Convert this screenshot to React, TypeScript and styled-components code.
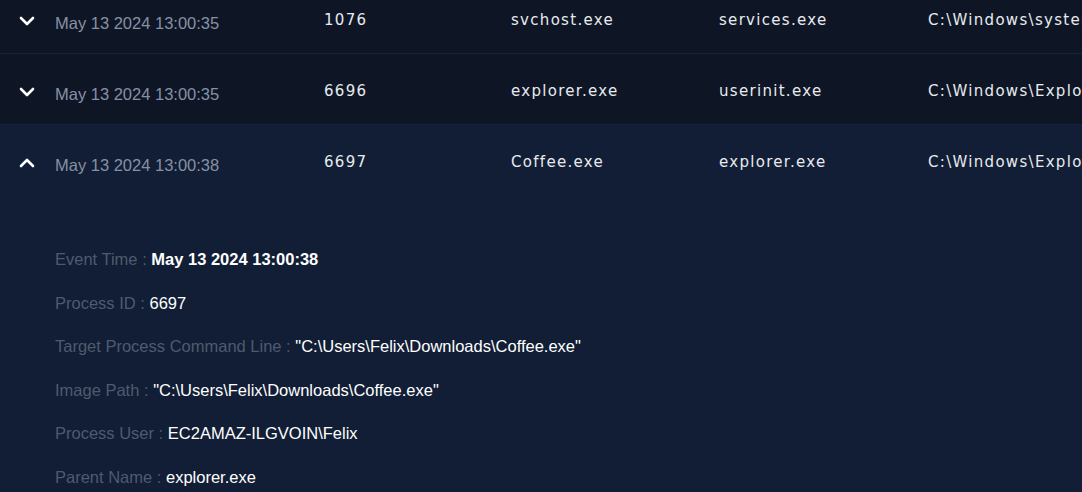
import styled, { createGlobalStyle } from "styled-components";

const GlobalStyle = createGlobalStyle`
  html, body {
    margin: 0;
    padding: 0;
    background-color: #0e1626;
    overflow: hidden;
  }
`;

const Table = styled.div`
  width: 1082px;
  height: 492px;
  overflow: hidden;
  background-color: #0e1626;
`;

const Scroller = styled.div`
  margin-top: -17px;
`;

const Row = styled.div<{ $open?: boolean }>`
  display: grid;
  grid-template-columns: 55px 269px 187px 208px 209px 1fr;
  align-items: center;
  height: 71px;
  background-color: ${(p) => (p.$open ? "#111e35" : "#0e1626")};
  border-bottom: 1px solid ${(p) => (p.$open ? "#111e35" : "#18223a")};
  box-sizing: border-box;
  white-space: nowrap;
  overflow: hidden;
`;

const Toggle = styled.div`
  display: flex;
  align-items: center;
  padding-left: 19px;
  padding-top: 6px;
`;

const DateCell = styled.div`
  font-family: "Liberation Sans", Arial, sans-serif;
  font-size: 16.5px;
  color: #8790a4;
  padding-top: 10px;
`;

const Cell = styled.div`
  font-family: "DejaVu Sans", "Open Sans", sans-serif;
  font-size: 15px;
  letter-spacing: 1.3px;
  color: #e8eaee;
  padding-top: 4px;
  overflow: hidden;
`;

const Details = styled.div`
  background-color: #111e35;
  padding: 54px 0 0 55px;
  height: 400px;
`;

const Line = styled.div`
  height: 43.6px;
  font-family: "Liberation Sans", Arial, sans-serif;
  font-size: 16.5px;
  white-space: nowrap;
`;

const Label = styled.span`
  color: #4f5a6f;
`;

const Value = styled.span<{ $bold?: boolean }>`
  color: #ffffff;
  font-weight: ${(p) => (p.$bold ? 700 : 400)};
`;

const Chevron = ({ up }: { up?: boolean }) => (
  <svg width="16" height="10" viewBox="0 0 16 10">
    <polyline
      points={up ? "2,8 8,2 14,8" : "2,2 8,8 14,2"}
      fill="none"
      stroke="#ffffff"
      strokeWidth="2.6"
      strokeLinecap="round"
      strokeLinejoin="round"
    />
  </svg>
);

const events = [
  { time: "May 13 2024 13:00:35", pid: "1076", name: "svchost.exe", parent: "services.exe", path: "C:\\Windows\\system32\\svchost.exe" },
  { time: "May 13 2024 13:00:35", pid: "6696", name: "explorer.exe", parent: "userinit.exe", path: "C:\\Windows\\Explorer.EXE" },
  { time: "May 13 2024 13:00:38", pid: "6697", name: "Coffee.exe", parent: "explorer.exe", path: "C:\\Windows\\Explorer.EXE", open: true },
];

const details = [
  { label: "Event Time", value: "May 13 2024 13:00:38", bold: true },
  { label: "Process ID", value: "6697" },
  { label: "Target Process Command Line", value: '"C:\\Users\\Felix\\Downloads\\Coffee.exe"' },
  { label: "Image Path", value: '"C:\\Users\\Felix\\Downloads\\Coffee.exe"' },
  { label: "Process User", value: "EC2AMAZ-ILGVOIN\\Felix" },
  { label: "Parent Name", value: "explorer.exe" },
];

export default function App() {
  return (
    <Table>
      <GlobalStyle />
      <Scroller>
        {events.map((e, i) => (
          <div key={i}>
            <Row $open={e.open}>
              <Toggle>
                <Chevron up={e.open} />
              </Toggle>
              <DateCell>{e.time}</DateCell>
              <Cell>{e.pid}</Cell>
              <Cell>{e.name}</Cell>
              <Cell>{e.parent}</Cell>
              <Cell>{e.path}</Cell>
            </Row>
            {e.open && (
              <Details>
                {details.map((d) => (
                  <Line key={d.label}>
                    <Label>{d.label} : </Label>
                    <Value $bold={d.bold}>{d.value}</Value>
                  </Line>
                ))}
              </Details>
            )}
          </div>
        ))}
      </Scroller>
    </Table>
  );
}
